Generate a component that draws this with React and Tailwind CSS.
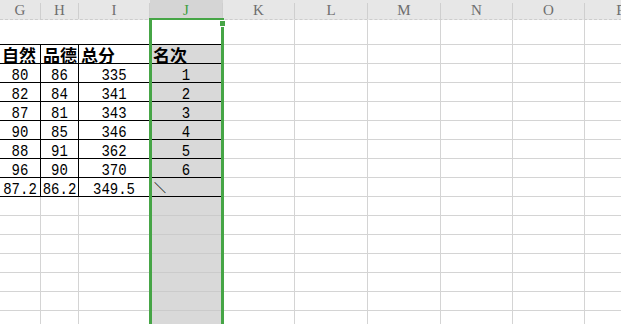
import React from "react";

const cols = [
  { key: "G", w: "w-[41px]" },
  { key: "H", w: "w-[38px]" },
  { key: "I", w: "w-[71px]" },
  { key: "J", w: "w-[73px]" },
  { key: "K", w: "w-[72px]" },
  { key: "L", w: "w-[73px]" },
  { key: "M", w: "w-[73px]" },
  { key: "N", w: "w-[72px]" },
  { key: "O", w: "w-[72px]" },
  { key: "P", w: "w-[72px]" },
];

// columns right of the table (plain grid)
const restCols = cols.slice(4);

const scores = [
  ["80", "86", "335", "1"],
  ["82", "84", "341", "2"],
  ["87", "81", "343", "3"],
  ["90", "85", "346", "4"],
  ["88", "91", "362", "5"],
  ["96", "90", "370", "6"],
  ["87.2", "86.2", "349.5", "＼"],
];

const headings = ["自然", "品德", "总分", "名次"];

const mono = "font-['Liberation_Mono',monospace]";
const cjk = "font-['Noto_Sans_CJK_SC',sans-serif]";

function EmptyCells() {
  return restCols.map((c) => (
    <div
      key={c.key}
      className={`${c.w} shrink-0 border-r border-b border-[#d4d4d4]`}
    />
  ));
}

function HeaderRow() {
  return (
    <div className="flex h-[20px] shrink-0 bg-[#e7e7e7] border-b border-dashed border-[#cdcdcd]">
      {cols.map((c) => (
        <div
          key={c.key}
          className={`${c.w} shrink-0 flex ${c.key === "J" ? "bg-[#d5d5d5]" : ""}`}
        >
          <div
            className={`flex-1 flex items-center justify-center pt-[2px] text-[15px] leading-none font-['Liberation_Serif',serif] ${
              c.key === "J" ? "text-[#3f9f3f]" : "text-[#6e6e6e]"
            }`}
          >
            {c.key}
          </div>
          <div className="w-px mt-[3px] bg-[#cfcfcf]" />
        </div>
      ))}
    </div>
  );
}

function NumCell({ w, children, shaded }) {
  return (
    <div
      className={`${w} shrink-0 flex items-end justify-center border-r border-b border-black text-[14px] leading-[12px] text-black ${mono} ${
        shaded ? "bg-[#d9d9d9]" : ""
      }`}
    >
      <span className="inline-block origin-bottom scale-y-[1.18]">{children}</span>
    </div>
  );
}

export default function App() {
  return (
    <div className="relative w-[621px] h-[324px] overflow-hidden bg-white">
      <div className="flex flex-col w-[657px]">
        <HeaderRow />

        {/* title row, G..I merged */}
        <div className="flex h-[25px] shrink-0">
          <div className="w-[150px] shrink-0 border-b border-black" />
          <div className="w-[73px] shrink-0 border-b border-black bg-white" />
          <EmptyCells />
        </div>

        {/* column headings */}
        <div className="flex h-[19px] shrink-0">
          {headings.map((h, i) => (
            <div
              key={h}
              className={`${cols[i].w} shrink-0 flex items-end ${
                i === 3 ? "pl-[3px] bg-[#d9d9d9]" : "pl-[2px]"
              } border-r border-b border-black text-[17px] leading-[17px] font-bold text-black ${cjk}`}
            >
              {h}
            </div>
          ))}
          <EmptyCells />
        </div>

        {scores.map((row, r) => (
          <div key={r} className="flex h-[19px] shrink-0">
            <NumCell w="w-[41px]">{row[0]}</NumCell>
            <NumCell w="w-[38px]">{row[1]}</NumCell>
            <NumCell w="w-[71px]">{row[2]}</NumCell>
            {row[3] === "＼" ? (
              <div
                className={`w-[73px] shrink-0 flex items-center pl-[4px] pt-[2px] border-r border-b border-black bg-[#d9d9d9] text-[12px] leading-none text-black ${cjk}`}
              >
                {row[3]}
              </div>
            ) : (
              <NumCell w="w-[73px]" shaded>
                {row[3]}
              </NumCell>
            )}
            <EmptyCells />
          </div>
        ))}

        {/* blank rows below the table */}
        {Array.from({ length: 8 }).map((_, r) => (
          <div key={r} className="flex h-[19px] shrink-0">
            <div className="w-[41px] shrink-0 border-r border-b border-[#d4d4d4]" />
            <div className="w-[38px] shrink-0 border-r border-b border-[#d4d4d4]" />
            <div className="w-[71px] shrink-0 border-r border-b border-[#d4d4d4]" />
            <div className="w-[73px] shrink-0 bg-[#d9d9d9] border-b border-[#cbcbcb]" />
            <EmptyCells />
          </div>
        ))}
      </div>

      {/* selected column J */}
      <div className="absolute left-[149px] top-[18px] w-[75px] h-[320px] border-l-[3px] border-r-[3px] border-t-2 border-[#46a546]" />
      <div className="absolute left-[219px] top-[20px] w-[7px] h-[7px] bg-white p-px">
        <div className="w-[5px] h-[5px] bg-[#46a546]" />
      </div>
    </div>
  );
}
